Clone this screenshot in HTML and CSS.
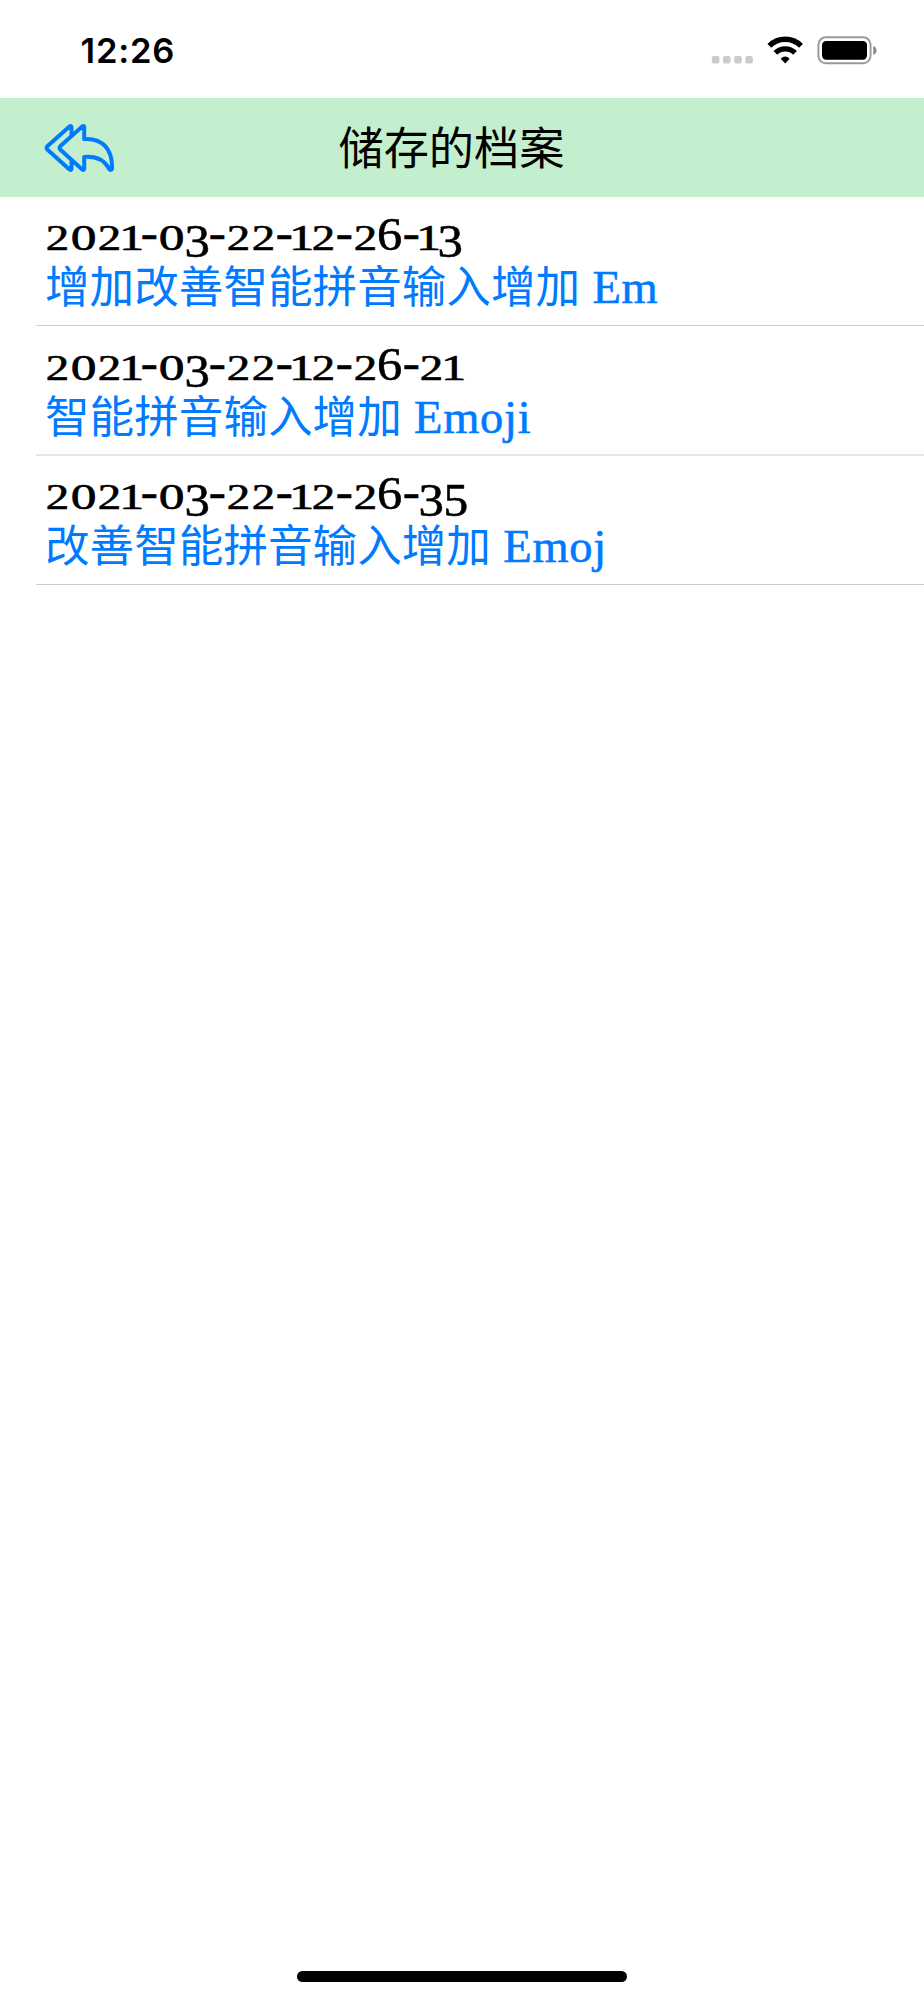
FILE: index.html
```
<!DOCTYPE html>
<html lang="zh-CN">
<head>
<meta charset="utf-8">
<title>储存的档案</title>
<link rel="stylesheet" href="styles.css">
</head>
<body>
<div class="screen">
  <div class="status">
    <div class="time">12:26</div>
    <svg class="indicators" width="180" height="50" viewBox="700 25 180 50">
      <g fill="#cbcbcb"><rect x="711.8" y="56" width="7.6" height="7.4" rx="2"/><rect x="723" y="56" width="7.6" height="7.4" rx="2"/><rect x="734.2" y="56" width="7.6" height="7.4" rx="2"/><rect x="745.3" y="56" width="7.6" height="7.4" rx="2"/></g>
      <g fill="none" stroke="#000" stroke-width="5.4"><path d="M769.4 45.8a22.4 22.4 0 0 1 31.6 0"/><path d="M775.4 52.9a14 14 0 0 1 19.6 0"/></g>
      <path d="M785.2 63.4l-4.5-4.7q4.5-4.2 9 0z"/>
      <rect x="818.4" y="37.3" width="52.2" height="26" rx="7.5" fill="none" stroke="#999" stroke-width="1.9"/>
      <rect x="822" y="40.9" width="45" height="18.8" rx="4.2"/>
      <path fill="#8d8d8d" d="M873.2 46q3.4 1.2 3.4 4.4t-3.4 4.4z"/>
    </svg>
  </div>
  <header class="nav">
    <svg class="back" width="72" height="50" viewBox="43 122 72 50" fill="none" stroke="#007aff" stroke-width="4" stroke-linejoin="round">
      <path d="M71.5 136.5V127Q71.3 125.5 69.5 126.5L47.3 146.2Q46 147.8 47.3 149.4L69.5 169.5Q71.3 170.8 71.5 168.8V159.5"/>
      <path d="M84.2 127Q84 125.3 82.2 126.5L60.2 146.2Q59 147.8 60.2 149.4L82.2 169.5Q84 170.8 84.2 168.8V157C97 155.9 104.5 160.2 109.2 169Q111.2 171 112 168.8C112.8 150 103 137.8 84.2 139Z"/>
    </svg>
    <h1 class="title">储存的档案</h1>
  </header>
  <ul class="files">
    <li class="file"><div class="date"><i class="two">2</i><i class="zero">0</i><i class="two">2</i><i class="one">1</i><i class="dash">-</i><i class="zero">0</i><i class="three">3</i><i class="dash">-</i><i class="two">2</i><i class="two">2</i><i class="dash">-</i><i class="one">1</i><i class="two">2</i><i class="dash">-</i><i class="two">2</i><i class="six">6</i><i class="dash">-</i><i class="one">1</i><i class="three">3</i></div>
      <div class="name">增加改善智能拼音输入增加<span class="latin"> Em</span></div></li>
    <li class="file soft"><div class="date"><i class="two">2</i><i class="zero">0</i><i class="two">2</i><i class="one">1</i><i class="dash">-</i><i class="zero">0</i><i class="three">3</i><i class="dash">-</i><i class="two">2</i><i class="two">2</i><i class="dash">-</i><i class="one">1</i><i class="two">2</i><i class="dash">-</i><i class="two">2</i><i class="six">6</i><i class="dash">-</i><i class="two">2</i><i class="one">1</i></div>
      <div class="name">智能拼音输入增加<span class="latin"> Emoji</span></div></li>
    <li class="file"><div class="date"><i class="two">2</i><i class="zero">0</i><i class="two">2</i><i class="one">1</i><i class="dash">-</i><i class="zero">0</i><i class="three">3</i><i class="dash">-</i><i class="two">2</i><i class="two">2</i><i class="dash">-</i><i class="one">1</i><i class="two">2</i><i class="dash">-</i><i class="two">2</i><i class="six">6</i><i class="dash">-</i><i class="three">3</i><i class="five">5</i></div>
      <div class="name">改善智能拼音输入增加<span class="latin"> Emoj</span></div></li>
  </ul>
  <div class="home"></div>
</div>
</body>
</html>
```
FILE: styles.css
```
* { box-sizing: border-box; }
body { margin: 0; background: #fff; color: #000; }
.screen { width: 924px; height: 2000px; display: flex; flex-direction: column; }
.status { height: 98px; display: flex; justify-content: space-between; padding: 25px 44px 0 80.5px; }
.time { padding-top: 1px; font: 600 34.5px/50px Inter, sans-serif; letter-spacing: 0.8px; }
.indicators { display: block; }
.nav { height: 98.5px; background: #c3efce; display: flex; padding-left: 43px; }
.back { display: block; margin-top: 24px; flex: none; }
.title { margin: 0 0 0 223.5px; font: 400 45.2px/95px "Noto Sans CJK SC", sans-serif; }
.files { list-style: none; margin: 0; padding: 0 0 0 36px; flex: 1; }
.file { height: 129.5px; padding: 12.5px 0 0 9px; border-bottom: 1px solid #cdcdcf; }
.file.soft { border-bottom: 2px solid #e6e6e7; }
/* Text figures: short 0-2, descending 3 and 5, ascending 6 */
.date { height: 50px; display: flex; align-items: baseline; font: 44.5px/50px "Liberation Serif", serif; -webkit-text-stroke: 0.6px currentColor; }
.date i { display: flex; justify-content: center; font-style: normal; }
.date .zero, .date .one, .date .two { font-size: 36px; }
.date .three, .date .five, .date .six { font-size: 47px; }
.date .zero { width: 27.3px; transform: scaleX(1.43); }
.date .one { width: 19.1px; transform: scaleX(1.4); }
.date .two { width: 24.8px; transform: scaleX(1.3); }
.date .three { width: 24.5px; transform: translateY(7px) scaleX(1.08); }
.date .five { width: 23.5px; transform: translateY(7px) scaleX(1.05); }
.date .six { width: 25.2px; transform: scaleX(1.07); }
.date .dash { width: 16.6px; transform: translateY(-2px) scaleX(1.15); }
.name { font: 44.6px/50px "Noto Sans CJK SC", sans-serif; color: #007aff; white-space: nowrap; }
.latin { font: 46.5px/50px "Liberation Serif", serif; letter-spacing: 0.7px; -webkit-text-stroke: 0.6px currentColor; }
.home { width: 330px; height: 11px; margin: 0 auto 18px; border-radius: 6px; background: #000; }
```
